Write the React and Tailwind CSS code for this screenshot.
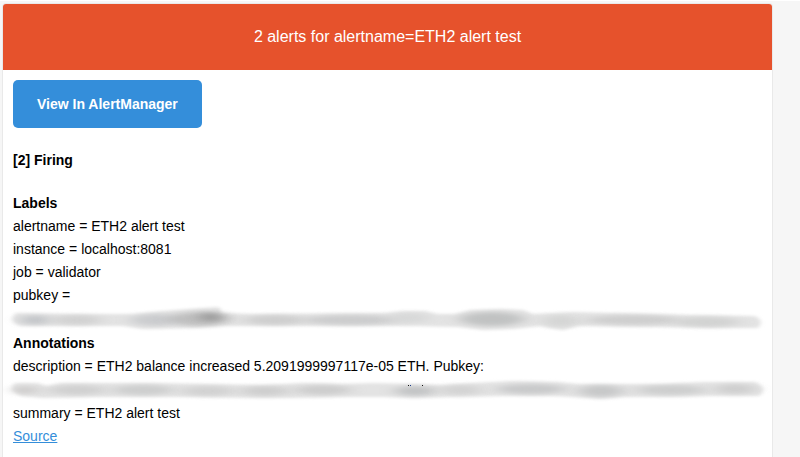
const labels = [
  { name: "alertname", value: "ETH2 alert test" },
  { name: "instance", value: "localhost:8081" },
  { name: "job", value: "validator" },
  { name: "pubkey", value: "" },
];

// Brush strokes covering the public keys, drawn in a 749x24 box
const pubkeyStroke = {
  path: "M3 6 L60 7 L120 7 L150 4 L190 1 L204 0 Q209 1 208 6 L240 7 L372 6 L390 4 L412 4 L424 7 L442 7 L458 3 L490 2 L510 3 L520 7 L560 5 L600 6 L680 8 L742 9 Q752 14 745 21 L700 21 L640 20 L565 19 L550 23 L536 21 L528 19 L500 22 L470 23 L445 20 L400 19 L300 19 L212 19 L180 21 L130 22 L110 19 L8 19 Q-6 15 3 6Z",
  smudges: [
    { x: 22, y: 13, rx: 14, ry: 5, fill: "#b8bbc0" },
    { x: 64, y: 13, rx: 24, ry: 5, fill: "#cccccc" },
    { x: 142, y: 13, rx: 24, ry: 6, fill: "#c3c5c8" },
    { x: 186, y: 12, rx: 30, ry: 7, fill: "#b4b4b4" },
    { x: 198, y: 10, rx: 10, ry: 5, fill: "#8c8c8c" },
    { x: 262, y: 13, rx: 30, ry: 5, fill: "#c8c8c8" },
    { x: 338, y: 13, rx: 46, ry: 5, fill: "#c4c5c6" },
    { x: 396, y: 11, rx: 20, ry: 5, fill: "#d4d5d5" },
    { x: 479, y: 12, rx: 32, ry: 7, fill: "#b6b8b8" },
    { x: 548, y: 14, rx: 18, ry: 6, fill: "#d0d1d0" },
    { x: 620, y: 13, rx: 46, ry: 5, fill: "#c8c8c8" },
    { x: 694, y: 15, rx: 32, ry: 5, fill: "#cccdcc" },
  ],
  specks: [],
};

const descriptionStroke = {
  path: "M2 5 L24 5 L34 8 L48 5 L140 5 L250 7 L290 5 L330 6 L360 5 L400 6 L428 7 L460 5 L500 3 L545 4 L565 6 L600 6 L650 6 L690 4 L742 4 Q756 10 746 18 L700 18 L655 19 L610 19 L588 21 L560 19 L540 18 L490 18 L440 19 L400 20 L370 19 L330 19 L280 20 L240 20 L180 19 L80 19 L30 20 L8 18 Q-6 12 2 5Z",
  smudges: [
    { x: 12, y: 12, rx: 12, ry: 4, fill: "#c6c4c3" },
    { x: 64, y: 12, rx: 28, ry: 5, fill: "#cacaca" },
    { x: 130, y: 12, rx: 30, ry: 5, fill: "#c6c7c7" },
    { x: 195, y: 13, rx: 26, ry: 5, fill: "#cccccc" },
    { x: 252, y: 13, rx: 24, ry: 5, fill: "#c8c8c8" },
    { x: 310, y: 12, rx: 28, ry: 5, fill: "#c6c6c6" },
    { x: 402, y: 13, rx: 20, ry: 5, fill: "#b8babb" },
    { x: 448, y: 12, rx: 20, ry: 5, fill: "#cecece" },
    { x: 518, y: 11, rx: 34, ry: 5, fill: "#c0c1c2" },
    { x: 588, y: 13, rx: 22, ry: 6, fill: "#bebfc0" },
    { x: 658, y: 12, rx: 34, ry: 5, fill: "#c6c7c7" },
    { x: 722, y: 11, rx: 20, ry: 5, fill: "#c8c8c8" },
  ],
  specks: [
    { x: 395, fill: "#111111" },
    { x: 397, fill: "#1c3f8f" },
    { x: 409, fill: "#111111" },
  ],
};

function Redacted({ id, stroke }) {
  return (
    <svg
      className="block h-6 w-full overflow-visible"
      viewBox="0 0 749 24"
      preserveAspectRatio="none"
      aria-hidden="true"
    >
      <defs>
        <filter id={`${id}-edge`} x="-5%" y="-50%" width="110%" height="200%">
          <feGaussianBlur stdDeviation="2 1.8" />
        </filter>
        <filter id={`${id}-smudge`} x="-80%" y="-80%" width="260%" height="260%">
          <feGaussianBlur stdDeviation="8 2" />
        </filter>
      </defs>
      <path d={stroke.path} fill="#e3e3e3" filter={`url(#${id}-edge)`} />
      {stroke.smudges.map((s) => (
        <ellipse
          key={s.x}
          cx={s.x}
          cy={s.y}
          rx={s.rx}
          ry={s.ry}
          fill={s.fill}
          opacity="0.75"
          filter={`url(#${id}-smudge)`}
        />
      ))}
      {stroke.specks.map((s) => (
        <rect key={s.x} x={s.x} y="7" width="1" height="1" fill={s.fill} />
      ))}
    </svg>
  );
}

export default function App() {
  return (
    <div className="flex min-h-screen border-t border-white bg-[#f6f6f6] pt-0.5 pr-[27px] pl-0.5 font-['Liberation_Sans',Arial,sans-serif] text-sm leading-[23px] text-black">
      <main className="flex-1 overflow-hidden rounded-t-[4px] border border-b-0 border-[#e9e9e9] bg-white">
        <h1 className="bg-[#e6522c] p-5 text-center text-base leading-[26px] text-white">
          2 alerts for alertname=ETH2 alert test
        </h1>

        <div className="px-2.5 pt-2.5 pb-2">
          <a
            href="#alertmanager"
            className="inline-block rounded-[5px] bg-[#348eda] px-6 py-3 align-top leading-6 font-bold text-white"
          >
            View In AlertManager
          </a>

          <h2 className="mt-5 leading-6 font-bold">[2] Firing</h2>

          <section className="mt-[19px]">
            <h3 className="leading-6 font-bold">Labels</h3>
            {labels.map((label) => (
              <p key={label.name}>
                {label.name} = {label.value}
              </p>
            ))}
            <Redacted id="pubkey" stroke={pubkeyStroke} />
          </section>

          <section>
            <h3 className="leading-6 font-bold">Annotations</h3>
            <p>description = ETH2 balance increased 5.2091999997117e-05 ETH. Pubkey:</p>
            <Redacted id="description" stroke={descriptionStroke} />
            <p>summary = ETH2 alert test</p>
            <p>
              <a href="#source" className="text-[#348eda] underline">
                Source
              </a>
            </p>
          </section>
        </div>
      </main>
    </div>
  );
}
